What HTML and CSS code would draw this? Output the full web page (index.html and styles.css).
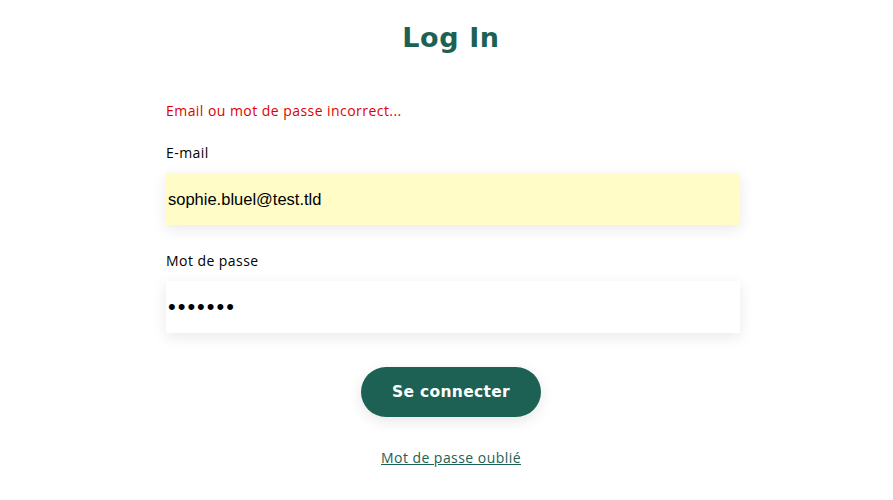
FILE: index.html
```html
<!DOCTYPE html>
<html lang="fr">
<head>
  <meta charset="UTF-8">
  <title>Sophie Bluel - Log In</title>
  <link rel="stylesheet" href="styles.css">
</head>
<body>
<main class="login">
  <h2>Log In</h2>
  <form class="login-form">
    <p class="error">Email ou mot de passe incorrect...</p>
    <label for="email">E-mail</label>
    <input type="email" id="email" class="autofilled" value="sophie.bluel@test.tld">
    <label for="password">Mot de passe</label>
    <input type="password" id="password" value="S0phie!">
    <button type="submit">Se connecter</button>
    <a href="#" class="forgot">Mot de passe oublié</a>
  </form>
</main>
</body>
</html>
```

FILE: styles.css
```css
body {
  margin: 0;
  padding: 20px 0 0 13px;
  font-family: "Open Sans", "Noto Sans", sans-serif;
  background: #fff;
}
.login {
  width: 574px;
  margin: 0 auto;
}
.login h2 {
  margin: 0 4px 0 0;
  text-align: center;
  font-family: "DejaVu Sans", sans-serif;
  font-weight: bold;
  font-size: 27px;
  line-height: 36px;
  color: #1d6154;
  letter-spacing: 0.6px;
}
.login-form {
  display: flex;
  flex-direction: column;
  margin-top: 45px;
  letter-spacing: 0.45px;
}
.error {
  margin: 0 0 22px;
  color: #e00000;
  font-size: 14px;
  line-height: 20px;
}
.login-form label {
  font-size: 14px;
  line-height: 20px;
  color: #000;
  margin-bottom: 10px;
}
.login-form input {
  height: 52px;
  border: none;
  padding: 0 2px;
  margin-bottom: 26px;
  font-family: "Liberation Sans", Arial, sans-serif;
  font-size: 16.5px;
  letter-spacing: 0;
  color: #000;
  background: #fff;
  box-shadow: 0 4px 14px rgba(0, 0, 0, 0.09);
  outline: none;
}
.login-form input.autofilled {
  background: #fffcc8;
}
.login-form input[type="password"] {
  font-size: 22px;
  letter-spacing: 2px;
}
.login-form button {
  align-self: center;
  width: 180px;
  height: 50px;
  margin: 8px 4px 0 0;
  border: none;
  border-radius: 60px;
  background: #1d6154;
  color: #fff;
  font-family: "DejaVu Sans", sans-serif;
  font-weight: bold;
  font-size: 15.5px;
  letter-spacing: 0.3px;
  box-shadow: 0 4px 14px rgba(0, 0, 0, 0.1);
  cursor: pointer;
}
.forgot {
  align-self: center;
  margin: 31px 4px 0 0;
  font-size: 14px;
  color: #1d6154;
}
```
